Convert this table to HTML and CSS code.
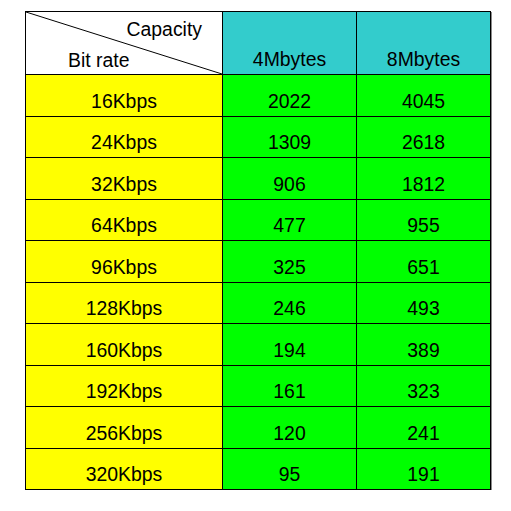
FILE: index.html
```html
<!DOCTYPE html>
<html>
<head>
    <link rel="stylesheet" href="styles.css">
</head>
<body>
    <table class="rates">
        <tr class="head-row">
            <th class="corner">
                <svg class="diag" viewBox="0 0 100 100" preserveAspectRatio="none">
                    <line x1="0" y1="0" x2="100" y2="100" stroke="#000" stroke-width="1" vector-effect="non-scaling-stroke"/>
                </svg>
                <div class="cap">Capacity</div>
                <div class="bit">Bit rate</div>
            </th>
            <th class="size">4Mbytes</th>
            <th class="size">8Mbytes</th>
        </tr>
        <tr><td class="rate">16Kbps</td><td>2022</td><td>4045</td></tr>
        <tr><td class="rate">24Kbps</td><td>1309</td><td>2618</td></tr>
        <tr><td class="rate">32Kbps</td><td>906</td><td>1812</td></tr>
        <tr><td class="rate">64Kbps</td><td>477</td><td>955</td></tr>
        <tr><td class="rate">96Kbps</td><td>325</td><td>651</td></tr>
        <tr><td class="rate">128Kbps</td><td>246</td><td>493</td></tr>
        <tr><td class="rate">160Kbps</td><td>194</td><td>389</td></tr>
        <tr><td class="rate">192Kbps</td><td>161</td><td>323</td></tr>
        <tr><td class="rate">256Kbps</td><td>120</td><td>241</td></tr>
        <tr><td class="rate">320Kbps</td><td>95</td><td>191</td></tr>
    </table>
</body>
</html>
```

FILE: styles.css
```css
body {
    margin: 0;
    background: #fff;
    font-family: "Liberation Sans", Arial, sans-serif;
}
.rates {
    margin: 11px 0 0 25px;
    width: 466px;
    border-collapse: collapse;
    table-layout: fixed;
    box-shadow: 1px 1px 0 #8a8a8a;
    font-size: 19.4px;
    color: #000;
}
.rates th,
.rates td {
    border: 1px solid #000;
    padding: 0 0 3px 0;
    text-align: center;
    vertical-align: bottom;
    font-weight: normal;
    line-height: normal;
}
.rates td {
    height: 41.5px;
    box-sizing: border-box;
    background: #00ff00;
}
.rates td.rate {
    background: #ffff00;
}
.head-row th {
    height: 63px;
    box-sizing: border-box;
}
.rates th.corner {
    width: 197px;
    position: relative;
    background: #fff;
    text-align: left;
}
.size {
    background: #33cccc;
}
.diag {
    position: absolute;
    left: 0;
    top: 0;
    width: 100%;
    height: 100%;
}
.cap {
    text-align: right;
    padding-right: 20px;
    line-height: 22px;
}
.bit {
    padding-left: 42px;
    margin-top: 9px;
    line-height: 22px;
}
```
